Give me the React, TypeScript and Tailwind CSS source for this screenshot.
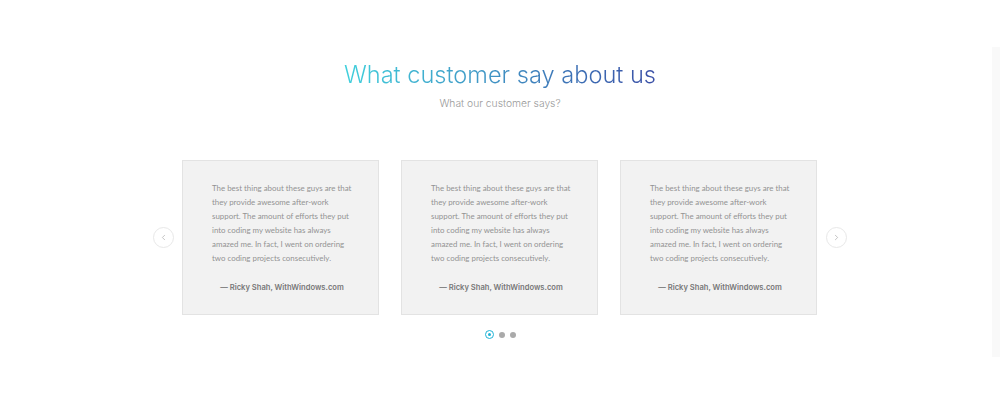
import { ChevronLeft, ChevronRight } from 'lucide-react';

const lines = [
    'The best thing about these guys are that',
    'they provide awesome after-work',
    'support. The amount of efforts they put',
    'into coding my website has always',
    'amazed me. In fact, I went on ordering',
    'two coding projects consecutively.',
];

function Card() {
    return (
        <div className="h-[155px] w-[197px] border border-[#e3e3e3] bg-[#f2f2f2] pl-[29px] pt-[20px]">
            <div className="w-[142px] text-[7.9px] leading-[14px] text-[#939393]" style={{ fontFamily: 'Lato, sans-serif' }}>
                {lines.map((l) => (
                    <div key={l} className="whitespace-nowrap">
                        {l}
                    </div>
                ))}
            </div>
            <div className="mt-[17px] w-[140px] text-center text-[7.6px] font-semibold text-[#777]" style={{ fontFamily: 'Inter, sans-serif' }}>
                — Ricky Shah, WithWindows.com
            </div>
        </div>
    );
}

export default function App() {
    return (
        <div className="relative h-[410px] w-full overflow-hidden bg-white" style={{ fontFamily: 'Inter, sans-serif' }}>
            <div className="absolute right-0 top-[47px] h-[310px] w-[8px] bg-[#f9f9f9]" />
            <div className="flex flex-col items-center pt-[59px]">
                <h2 className="bg-gradient-to-r from-[#3fd0dc] to-[#3a4fa6] bg-clip-text text-[23.6px] font-light leading-[32px] text-transparent">
                    What customer say about us
                </h2>
                <p className="mt-[5px] text-[10.3px] font-light text-[#999]">What our customer says?</p>
            </div>

            <div className="mt-[49px] flex items-center justify-center">
                <button className="mr-[8px] flex h-[21px] w-[21px] items-center justify-center rounded-full border border-[#e8e8e8] text-[#999]">
                    <ChevronLeft size={9} strokeWidth={1.5} />
                </button>
                <div className="flex gap-[22px]">
                    <Card />
                    <Card />
                    <Card />
                </div>
                <button className="ml-[9px] flex h-[21px] w-[21px] items-center justify-center rounded-full border border-[#e8e8e8] text-[#999]">
                    <ChevronRight size={9} strokeWidth={1.5} />
                </button>
            </div>

            <div className="mt-[15px] flex items-center justify-center gap-[5px]">
                <span className="flex h-[9px] w-[9px] items-center justify-center rounded-full border-[1.5px] border-[#1fb3d6]">
                    <span className="h-[3px] w-[3px] rounded-full bg-[#1fb3d6]" />
                </span>
                <span className="h-[6px] w-[6px] rounded-full bg-[#aaa]" />
                <span className="h-[6px] w-[6px] rounded-full bg-[#aaa]" />
            </div>
        </div>
    );
}
